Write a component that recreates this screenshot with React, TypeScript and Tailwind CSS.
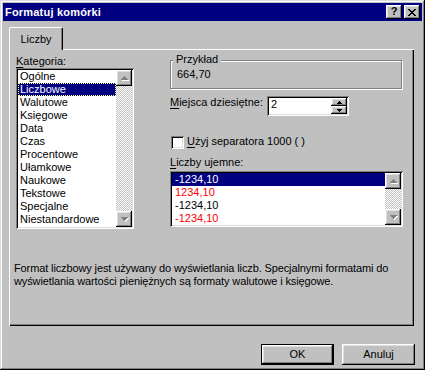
import type { ReactNode } from "react"

const raised =
  "shadow-[inset_-1px_-1px_#000,inset_1px_1px_#fff,inset_-2px_-2px_#808080,inset_2px_2px_#dfdfdf]"
const sunken =
  "shadow-[inset_1px_1px_#808080,inset_-1px_-1px_#fff,inset_2px_2px_#000,inset_-2px_-2px_#dfdfdf]"

// pixel triangle, rows widen 1,3,5,7
function Triangle({ dir, size, color }: { dir: "up" | "down"; size: number; color: string }) {
  const w = size * 2 - 1
  const rows = Array.from({ length: size }, (_, i) => (dir === "up" ? i : size - 1 - i))
  return (
    <svg width={w} height={size} shapeRendering="crispEdges">
      {rows.map((r, y) => (
        <rect key={y} x={size - 1 - r} y={y} width={r * 2 + 1} height={1} fill={color} />
      ))}
    </svg>
  )
}

function ScrollArrow({ dir }: { dir: "up" | "down" }) {
  return (
    <div className={`relative flex h-[16px] w-[16px] items-center justify-center bg-[#c0c0c0] ${raised}`}>
      <div className="relative">
        <div className="absolute left-[1px] top-[1px]">
          <Triangle dir={dir} size={4} color="#ffffff" />
        </div>
        <div className="relative">
          <Triangle dir={dir} size={4} color="#808080" />
        </div>
      </div>
    </div>
  )
}

function ScrollBar() {
  return (
    <div className="flex w-[16px] flex-col">
      <ScrollArrow dir="up" />
      <div className="flex-1 bg-[image:repeating-conic-gradient(#c0c0c0_0_25%,#ffffff_0_50%)] bg-size-[2px_2px]" />
      <ScrollArrow dir="down" />
    </div>
  )
}

function U({ children }: { children: ReactNode }) {
  return <span className="underline underline-offset-[2px]">{children}</span>
}

const categories = [
  "Ogólne",
  "Liczbowe",
  "Walutowe",
  "Księgowe",
  "Data",
  "Czas",
  "Procentowe",
  "Ułamkowe",
  "Naukowe",
  "Tekstowe",
  "Specjalne",
  "Niestandardowe",
]

const negatives = [
  { text: "-1234,10", color: "text-white", selected: true },
  { text: "1234,10", color: "text-[#ff0000]" },
  { text: "-1234,10", color: "text-black" },
  { text: "-1234,10", color: "text-[#ff0000]" },
]

export default function App() {
  return (
    <div className="flex h-[370px] w-[425px] flex-col bg-[#c0c0c0] p-[3px] font-['Liberation_Sans',Arial,sans-serif] text-[11px] leading-[13px] text-black shadow-[inset_-1px_-1px_#000,inset_1px_1px_#dfdfdf,inset_-2px_-2px_#808080,inset_2px_2px_#fff]">
      {/* title bar */}
      <div className="flex h-[18px] items-center justify-between bg-[#000080] pl-[2px] pr-[2px]">
        <span className="font-bold tracking-[0.2px] text-white">Formatuj komórki</span>
        <div className="flex items-center gap-[2px]">
          <div className={`flex h-[14px] w-[16px] items-center justify-center bg-[#c0c0c0] pb-[1px] text-[11px] font-bold ${raised}`}>
            ?
          </div>
          <div className={`flex h-[14px] w-[16px] items-center justify-center bg-[#c0c0c0] ${raised}`}>
            <svg width="8" height="7" shapeRendering="crispEdges">
              <path d="M0 0h2l2 2.5L6 0h2L5 3.5 8 7H6L4 4.5 2 7H0l3-3.5z" fill="#000" />
            </svg>
          </div>
        </div>
      </div>

      <div className="flex flex-col pl-[6px] pr-[7px] pt-[6px]">
        {/* tab */}
        <div className="relative z-10 -mb-[1px] flex h-[23px] w-[54px] items-center justify-center rounded-t-[2px] border-l border-r border-t border-white border-r-black bg-[#c0c0c0] shadow-[inset_-1px_0_#808080]">
          Liczby
        </div>

        {/* panel */}
        <div className="flex h-[277px] w-[405px] flex-col shadow-[inset_1px_1px_#fff,inset_-1px_-1px_#000,inset_-2px_-2px_#808080]">
          <div className="flex">
            <div className="ml-[7px] flex w-[118px] flex-col">
              <div className="mt-[6px] h-[13px]">
                <U>K</U>ategoria:
              </div>
              <div className={`flex h-[161px] bg-white p-[2px] ${sunken}`}>
                <div className="flex flex-1 flex-col">
                  {categories.map((c) =>
                    c === "Liczbowe" ? (
                      <div
                        key={c}
                        className="h-[13px] bg-[#000080] pl-[2px] text-white outline-1 -outline-offset-1 outline-dotted outline-[#ffff80]"
                      >
                        {c}
                      </div>
                    ) : (
                      <div key={c} className="h-[13px] pl-[2px]">
                        {c}
                      </div>
                    )
                  )}
                </div>
                <ScrollBar />
              </div>
            </div>

            <div className="ml-[36px] flex w-[233px] flex-col">
              <div className="relative mt-[11px] h-[29px] w-[232px] border border-[#808080] shadow-[inset_1px_1px_#fff,1px_1px_#fff]">
                <span className="absolute -top-[8px] left-[2px] bg-[#c0c0c0] px-[3px]">Przykład</span>
                <div className="pl-[6px] pt-[7px]">664,70</div>
              </div>

              <div className="mt-[7px] flex h-[20px] items-start">
                <div className="w-[97px]">
                  <U>M</U>iejsca dziesiętne:
                </div>
                <div className={`flex h-[20px] w-[82px] bg-white p-[2px] ${sunken}`}>
                  <div className="flex-1 pl-[2px]">2</div>
                  <div className="flex flex-col">
                    <div className={`flex h-[8px] w-[16px] items-center justify-center bg-[#c0c0c0] ${raised}`}>
                      <Triangle dir="up" size={3} color="#000" />
                    </div>
                    <div className={`flex h-[8px] w-[16px] items-center justify-center bg-[#c0c0c0] ${raised}`}>
                      <Triangle dir="down" size={3} color="#000" />
                    </div>
                  </div>
                </div>
              </div>

              <div className="mt-[19px] flex h-[13px] items-start">
                <div className={`ml-[1px] mt-[1px] h-[13px] w-[13px] bg-white ${sunken}`} />
                <div className="ml-[3px]">
                  <U>U</U>żyj separatora 1000 ( )
                </div>
              </div>

              <div className="mt-[8px] h-[13px]">
                <U>L</U>iczby ujemne:
              </div>
              <div className={`mt-[2px] flex h-[56px] w-[233px] bg-white p-[2px] ${sunken}`}>
                <div className="flex flex-1 flex-col">
                  {negatives.map((n, i) => (
                    <div key={i} className={`h-[13px] pl-[3px] ${n.color} ${n.selected ? "bg-[#000080]" : ""}`}>
                      {n.text}
                    </div>
                  ))}
                </div>
                <ScrollBar />
              </div>
            </div>
          </div>

          <p className="mt-[33px] whitespace-nowrap pl-[5px] tracking-[-0.12px]">
            Format liczbowy jest używany do wyświetlania liczb. Specjalnymi formatami do
            <br />
            wyświetlania wartości pieniężnych są formaty walutowe i księgowe.
          </p>
        </div>

        {/* buttons */}
        <div className="mt-[18px] flex justify-end gap-[8px]">
          <button className="h-[21px] w-[73px] border border-black bg-[#c0c0c0] p-0">
            <div className={`flex h-full w-full items-center justify-center ${raised}`}>OK</div>
          </button>
          <button className={`flex h-[21px] w-[73px] items-center justify-center bg-[#c0c0c0] ${raised}`}>
            Anuluj
          </button>
        </div>
      </div>
    </div>
  )
}
